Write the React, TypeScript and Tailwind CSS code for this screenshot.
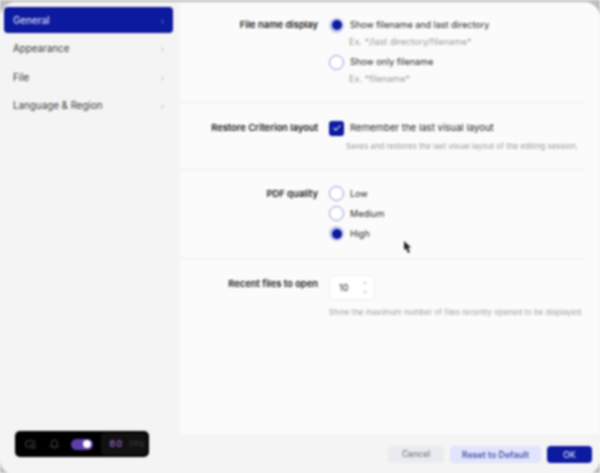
import { ChevronRight, ChevronUp, ChevronDown, Check, Bell, PictureInPicture2 } from "lucide-react";

const navItems = ["General", "Appearance", "File", "Language & Region"];

const Radio = ({ on, label }: { on?: boolean; label: string }) => (
  <div className="flex items-center gap-[6px] h-[14px]">
    {on ? (
      <span className="flex items-center justify-center w-[15px] h-[15px] rounded-full bg-[#c4c8ef]">
        <span className="w-[10px] h-[10px] rounded-full bg-[#0b1a9e]" />
      </span>
    ) : (
      <span className="w-[15px] h-[15px] rounded-full border border-[#8f96da] bg-white" />
    )}
    <span className="text-[9px] text-[#2a2a2a]">{label}</span>
  </div>
);

const Row = ({ label, children, className }: { label: string; children: React.ReactNode; className: string }) => (
  <div className={`flex gap-[11px] border-b border-[#ececec] mr-[17px] ${className}`}>
    <div className="w-[138px] text-right text-[9.4px] font-semibold text-[#1a1a1a] leading-[14px] shrink-0">{label}</div>
    <div className="flex-1 min-w-0">{children}</div>
  </div>
);

const App = () => {
  return (
    <div className="w-[600px] h-[473px] overflow-hidden bg-[#f4f4f4]">
      <div
        className="relative w-[600px] h-[473px] pt-[2px] bg-[#bdbdbd] blur-[0.9px]"
        style={{ fontFamily: "Inter, 'Liberation Sans', sans-serif" }}
      >
        <div className="flex flex-col h-[473px] rounded-[16px] overflow-hidden bg-[#f4f4f4]">
          <div className="flex flex-1 min-h-0">
            <aside className="w-[180px] shrink-0 bg-[#f4f4f4] pl-[4px] pr-[7px] pt-[5px]">
              {navItems.map((item, i) => (
                <div
                  key={item}
                  className={`flex items-center justify-between h-[26px] mb-[2.5px] pt-[2px] pl-[9px] pr-[7px] rounded-[4px] text-[9.8px] ${
                    i === 0 ? "bg-[#0b1a9e] text-[#d8dbf5] font-medium" : "text-[#3a3a3a]"
                  }`}
                >
                  <span>{item}</span>
                  <ChevronRight size={7} strokeWidth={2} className={i === 0 ? "text-[#c4c8ee]" : "text-[#999]"} />
                </div>
              ))}
            </aside>
            <main className="flex-1 bg-[#fbfbfb] pt-[16px]">
              <Row label="File name display" className="h-[85px]">
                <Radio on label="Show filename and last directory" />
                <p className="ml-[20px] mt-[3.5px] mb-[7.5px] text-[9px] leading-[12px] text-[#a0a0a0]">Ex. */last directory/filename*</p>
                <Radio label="Show only filename" />
                <p className="ml-[20px] mt-[4px] text-[9px] leading-[12px] text-[#a0a0a0]">Ex. *filename*</p>
              </Row>
              <Row label="Restore Criterion layout" className="h-[67px] pt-[18px]">
                <div className="flex items-center gap-[6px] h-[14px]">
                  <span className="flex items-center justify-center w-[15px] h-[15px] rounded-[3px] bg-[#0b1a9e]">
                    <Check size={10} strokeWidth={2.5} className="text-white" />
                  </span>
                  <span className="text-[9.6px] text-[#2a2a2a]">Remember the last visual layout</span>
                </div>
                <p className="ml-[17px] mt-[6px] text-[7.85px] leading-[10px] text-[#a0a0a0] whitespace-nowrap">Saves and restores the last visual layout of the editing session.</p>
              </Row>
              <Row label="PDF quality" className="h-[89px] pt-[16.5px]">
                <div className="flex flex-col gap-[6px]">
                  <Radio label="Low" />
                  <Radio label="Medium" />
                  <Radio on label="High" />
                </div>
              </Row>
              <div className="flex gap-[11px] pt-[18px] mr-[17px]">
                <div className="w-[138px] text-right text-[9.4px] font-semibold text-[#1a1a1a] leading-[14px] shrink-0">Recent files to open</div>
                <div className="flex-1 min-w-0">
                  <div className="flex items-center justify-between w-[46px] h-[25px] -mt-[2px] pl-[9px] pr-[6px] rounded-[4px] border border-[#eeeeee] bg-white text-[9px] text-[#2a2a2a]">
                    <span>10</span>
                    <span className="flex flex-col gap-[3px] text-[#555]">
                      <ChevronUp size={6} strokeWidth={2} />
                      <ChevronDown size={6} strokeWidth={2} />
                    </span>
                  </div>
                  <p className="mt-[7px] text-[7.85px] leading-[10px] text-[#a0a0a0] whitespace-nowrap">Show the maximum number of files recently opened to be displayed.</p>
                </div>
              </div>
            </main>
          </div>
          <footer className="flex items-start justify-end gap-[6px] h-[41px] pr-[8px] pt-[12px] bg-[#f4f4f4]">
            <button className="w-[56px] h-[17px] rounded-[4px] bg-[#e9ebf1] text-[8.5px] font-medium text-[#6f7582]">Cancel</button>
            <button className="w-[91px] h-[17px] rounded-[4px] bg-[#e1e4fb] text-[8.8px] font-medium text-[#303a9c]">Reset to Default</button>
            <button className="w-[45px] h-[17px] rounded-[4px] bg-[#0b1a9e] text-[8.8px] font-medium text-[#e0e2f8]">OK</button>
          </footer>
        </div>

        {/* fps overlay */}
        <div className="absolute left-[15px] top-[431px] flex items-center w-[134px] h-[26px] pl-[10px] pr-[2px] rounded-[5px] bg-black">
          <PictureInPicture2 size={11} className="text-[#555] mr-[13px]" />
          <Bell size={11} className="text-[#555] mr-[11px]" />
          <span className="flex items-center justify-end w-[23px] h-[11px] pr-[2px] mr-[8px] rounded-full bg-[#5f3dad]">
            <span className="w-[8px] h-[8px] rounded-full bg-white" />
          </span>
          <span className="flex items-center gap-[6px] h-[22px] pl-[8px] w-[46px] rounded-[4px] bg-[#111] text-[9px] font-semibold">
            <span className="text-[#8a5fb8] tracking-[1px]">60</span>
            <span className="text-[#333] text-[8px]">FPS</span>
          </span>
        </div>

        {/* mouse cursor */}
        <svg className="absolute left-[403px] top-[241px]" width="9" height="13" viewBox="0 0 9 13">
          <path d="M1 0 L1 9 L3 7.5 L5 12 L7 11 L5 7 L8 6.5 Z" fill="#222" />
        </svg>
      </div>
    </div>
  );
};

export default App;
